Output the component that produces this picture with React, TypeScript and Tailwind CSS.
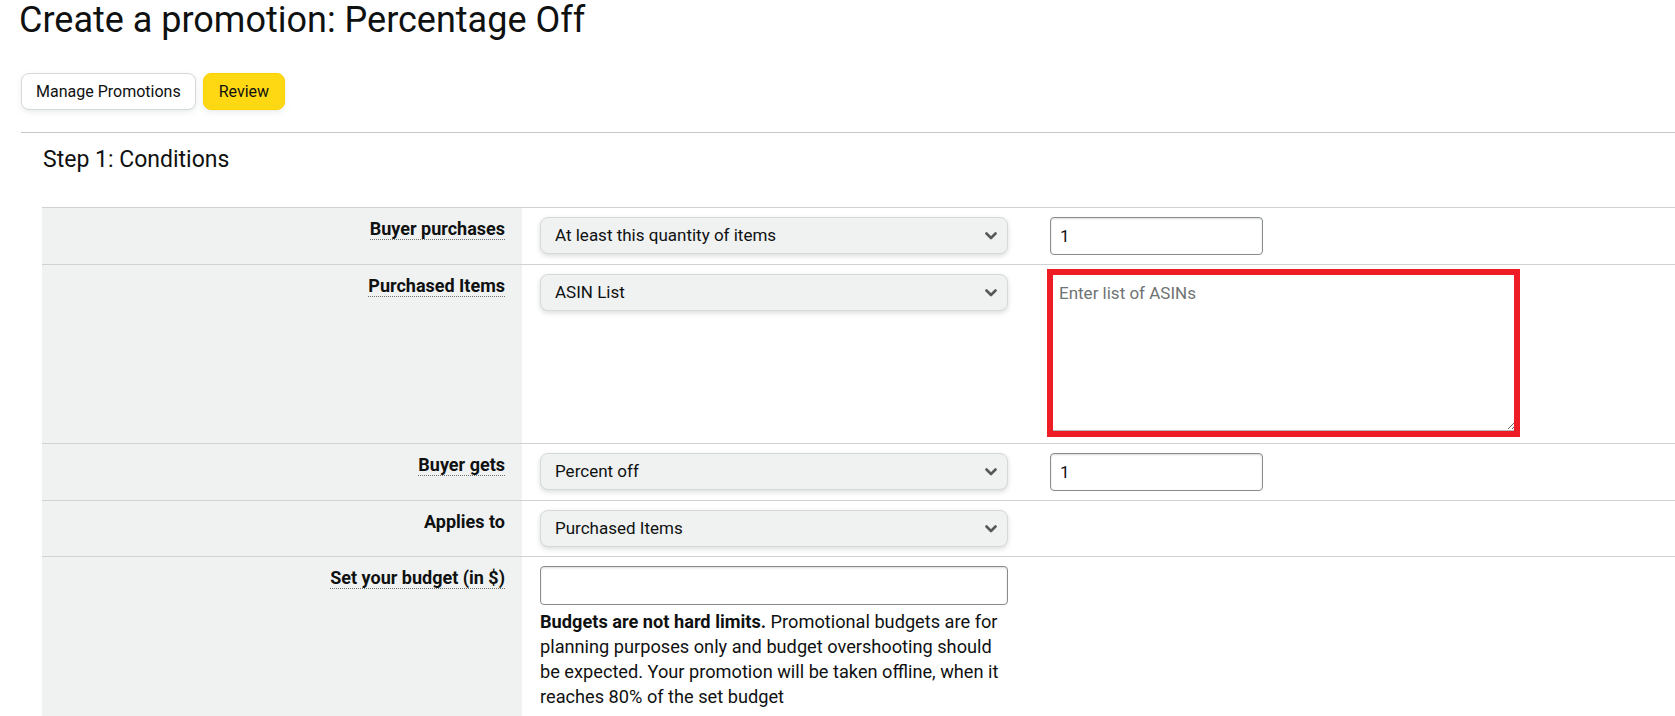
// Create promotion – Percentage Off, step 1 conditions form

const FONT = "font-['Roboto',_'Liberation_Sans',_sans-serif]";

function Chevron() {
  return (
    <svg width="12" height="8" viewBox="0 0 12 8" fill="none">
      <path d="M1.5 1.5 6 6l4.5-4.5" stroke="#565959" strokeWidth="2.6" strokeLinecap="round" strokeLinejoin="round" />
    </svg>
  );
}

function FakeSelect({ value }: { value: string }) {
  return (
    <div className="flex h-[37px] w-[468px] shrink-0 items-center justify-between rounded-[8px] border border-[#D5D9D9] bg-[#F0F2F2] pl-[14px] pr-[10px] text-[17px] text-[#0F1111] shadow-[0_2px_5px_rgba(15,17,17,0.15)]">
      <span>{value}</span>
      <Chevron />
    </div>
  );
}

function TextInput({ value, wide }: { value?: string; wide?: boolean }) {
  return (
    <input
      readOnly
      defaultValue={value}
      className={`${wide ? 'h-[39px] w-[468px]' : 'h-[38px] w-[213px]'} block shrink-0 rounded-[4px] border border-[#888C8C] bg-white px-[9px] text-[17px] text-[#0F1111] shadow-[inset_0_1px_2px_rgba(15,17,17,0.15)] outline-none`}
    />
  );
}

function Label({ children, dotted = true }: { children: React.ReactNode; dotted?: boolean }) {
  return <span className={dotted ? 'border-b border-dotted border-[#6F7373]' : ''}>{children}</span>;
}

function Row({ label, children }: { label: React.ReactNode; children: React.ReactNode }) {
  return (
    <div className="grid grid-cols-[480px_1fr] border-t border-[#CFD2D2]">
      <div className="bg-[#F0F2F2] pr-[17px] pt-[9px] text-right text-[18px] font-bold leading-[24px] text-[#0F1111]">
        {label}
      </div>
      <div className="flex items-start gap-[42px] py-[9px] pl-[18px]">{children}</div>
    </div>
  );
}

export default function App() {
  return (
    <div className={`${FONT} min-h-[716px] overflow-hidden bg-white text-[#0F1111]`}>
      <h1 className="pl-[19px] text-[36px] font-normal leading-[40px]">Create a promotion: Percentage Off</h1>

      <div className="pl-[21px]">
        <div className="mt-[33px] flex gap-[7px]">
          <button className="h-[37px] rounded-[8px] border border-[#D5D9D9] bg-white px-[14px] text-[16px] text-[#0F1111] shadow-[0_2px_5px_rgba(213,217,217,0.5)]">
            Manage Promotions
          </button>
          <button className="h-[37px] rounded-[8px] border border-[#FCD200] bg-[#FFD814] px-[15px] text-[16px] text-[#0F1111] shadow-[0_2px_5px_rgba(213,217,217,0.5)]">
            Review
          </button>
        </div>

        <div className="mt-[22px] border-t border-[#C4C7C7]" />

        <div className="pl-[21px]">
          <h2 className="mt-[13px] pl-px text-[23px] font-normal leading-[28px]">Step 1: Conditions</h2>

          <div className="mt-[33px]">
            <Row label={<Label>Buyer purchases</Label>}>
              <FakeSelect value="At least this quantity of items" />
              <TextInput value="1" />
            </Row>

            <Row label={<Label>Purchased Items</Label>}>
              <FakeSelect value="ASIN List" />
              <div className="relative">
                <textarea
                  placeholder="Enter list of ASINs"
                  className="block h-[160px] w-[467px] resize-y rounded-[4px] border border-[#888C8C] border-b-[4px] border-b-[#B5B8B8] bg-white px-[8px] py-[6px] text-[17px] leading-[24px] text-[#0F1111] outline-none placeholder:text-[#6F7373]"
                />
                <div className="pointer-events-none absolute -bottom-[3px] -left-[3px] -right-[3px] -top-[5px] border-[6px] border-[#EE1C25]" />
              </div>
            </Row>

            <Row label={<Label>Buyer gets</Label>}>
              <FakeSelect value="Percent off" />
              <TextInput value="1" />
            </Row>

            <Row label={<Label dotted={false}>Applies to</Label>}>
              <FakeSelect value="Purchased Items" />
            </Row>

            <Row label={<Label>Set your budget (in $)</Label>}>
              <div className="w-[468px]">
                <TextInput wide />
                <p className="mt-[4px] text-[18.2px] leading-[25px] text-[#0F1111]">
                  <span className="font-bold">Budgets are not hard limits.</span> Promotional budgets are for planning
                  purposes only and budget overshooting should be expected. Your promotion will be taken offline, when
                  it reaches 80% of the set budget
                </p>
              </div>
            </Row>
          </div>
        </div>
      </div>
    </div>
  );
}
